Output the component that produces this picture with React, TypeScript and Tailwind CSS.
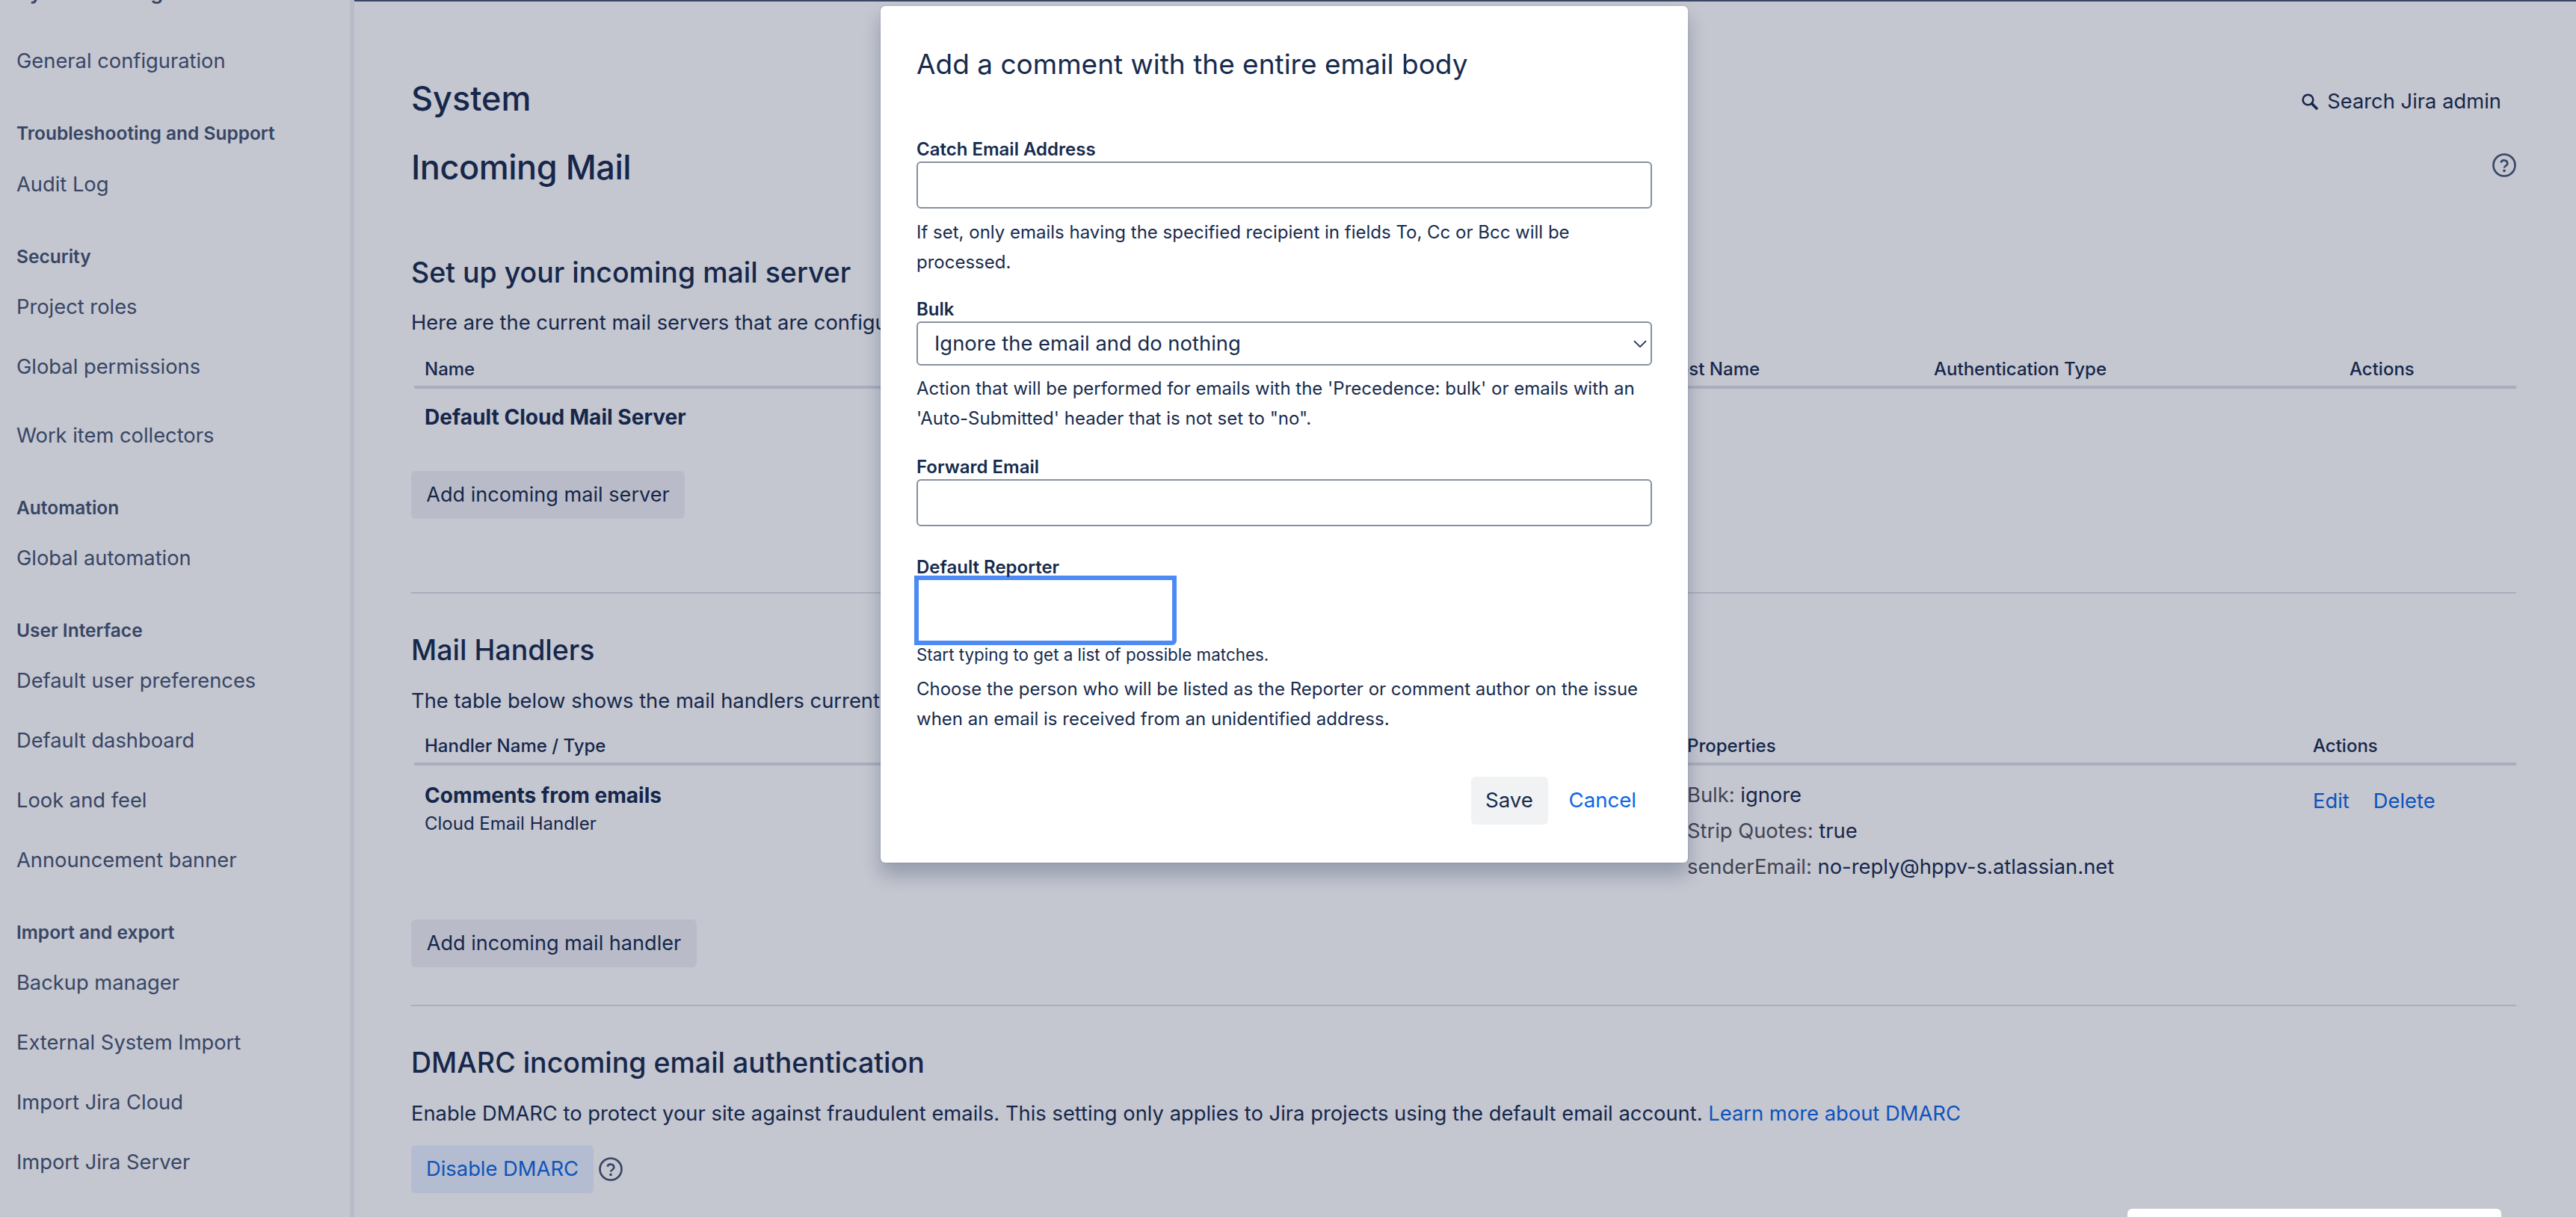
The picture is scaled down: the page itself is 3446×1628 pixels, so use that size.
import React from 'react';

const sideTop = 'pl-[22px] text-[27.3px] leading-[40px] text-[#44546f]';

const SideItem = ({ label, mt = 'mt-[40px]' }: { label: string; mt?: string }) => (
  <div className={`${sideTop} ${mt}`}>{label}</div>
);

const SideHead = ({ label, mt = 'mt-[60px]' }: { label: string; mt?: string }) => (
  <div className={`pl-[22px] text-[24.5px] leading-[32px] font-semibold text-[#44546f] ${mt}`}>{label}</div>
);

const HelpIcon = ({ className }: { className: string }) => (
  <svg viewBox="0 0 32 32" className={className} fill="none">
    <circle cx="16" cy="16" r="14.5" stroke="currentColor" strokeWidth="2.6" />
    <path d="M11.6 12.6a4.5 4.5 0 0 1 8.8 1c0 3-4.4 3.2-4.4 6" stroke="currentColor" strokeWidth="2.6" />
    <circle cx="16" cy="23.4" r="1.8" fill="currentColor" />
  </svg>
);

const Sidebar = () => (
  <aside className="w-[474px] shrink-0 border-r-[6px] border-[#f1f2f4] overflow-hidden">
    <div className={`${sideTop} mt-[-30px] font-semibold`}>System settings</div>
    <SideItem label="General configuration" mt="mt-[52px]" />
    <SideHead label="Troubleshooting and Support" mt="mt-[60px]" />
    <SideItem label="Audit Log" mt="mt-[33px]" />
    <SideHead label="Security" />
    <SideItem label="Project roles" mt="mt-[32px]" />
    <SideItem label="Global permissions" />
    <SideItem label="Work item collectors" mt="mt-[52px]" />
    <SideHead label="Automation" />
    <SideItem label="Global automation" mt="mt-[32px]" />
    <SideHead label="User Interface" />
    <SideItem label="Default user preferences" mt="mt-[32px]" />
    <SideItem label="Default dashboard" />
    <SideItem label="Look and feel" />
    <SideItem label="Announcement banner" />
    <SideHead label="Import and export" />
    <SideItem label="Backup manager" mt="mt-[32px]" />
    <SideItem label="External System Import" />
    <SideItem label="Import Jira Cloud" />
    <SideItem label="Import Jira Server" />
  </aside>
);

const Main = () => (
  <main className="flex-1 min-w-0 border-t-[2px] border-[#44546f] pl-[76px] pr-[80px] text-[#172b4d] text-[27.35px]">
    <div className="flex justify-between items-center h-[60px] mt-[100px]">
      <h1 className="text-[45px] leading-[60px] font-medium">System</h1>
      <div className="flex items-center gap-[12px] pr-[20px] mt-[8px]">
        <svg viewBox="0 0 22 22" className="w-[22px] h-[22px]" fill="none">
          <circle cx="8.5" cy="8.5" r="6.8" stroke="currentColor" strokeWidth="2.6" />
          <path d="M13.5 13.5l6.5 6.5" stroke="currentColor" strokeWidth="3.6" strokeLinecap="round" />
        </svg>
        Search Jira admin
      </div>
    </div>
    <div className="flex justify-between items-center mt-[32px] h-[60px]">
      <h2 className="text-[45px] leading-[60px] font-medium tracking-[-0.01em]">Incoming Mail</h2>
      <HelpIcon className="w-[32px] h-[32px] text-[#44546f] -mt-[6px]" />
    </div>

    <h3 className="text-[37.5px] leading-[52px] font-medium mt-[85px]">Set up your incoming mail server</h3>
    <p className="leading-[40px] mt-[21px]">Here are the current mail servers that are configured</p>
    <div className="ml-[4px] mt-[18px] border-b-[4px] border-[#dcdfe4] h-[50px] pl-[14px] grid grid-cols-[1647px_372px_556px_1fr] text-[24px] font-medium leading-[48px]">
      <span>Name</span>
      <span className="pl-[12px]">Host Name</span>
      <span>Authentication Type</span>
      <span>Actions</span>
    </div>
    <div className="pl-[18px] mt-[18px] font-bold text-[28.1px] leading-[40px]">Default Cloud Mail Server</div>
    <button className="block mt-[52px] h-[64px] w-[366px] rounded-[6px] bg-[#f1f2f4] text-[27.1px]">Add incoming mail server</button>

    <div className="border-t-[2px] border-[#dcdfe4] mt-[98px]" />

    <h3 className="text-[37.5px] leading-[52px] font-medium mt-[50px]">Mail Handlers</h3>
    <p className="leading-[40px] mt-[22px]">The table below shows the mail handlers currently configured</p>
    <div className="ml-[4px] mt-[16px] border-b-[4px] border-[#dcdfe4] h-[50px] pl-[14px] grid grid-cols-[1689px_837px_1fr] text-[24px] font-medium leading-[48px]">
      <span>Handler Name / Type</span>
      <span>Properties</span>
      <span>Actions</span>
    </div>
    <div className="ml-[4px] pl-[14px] grid grid-cols-[1689px_837px_1fr] mt-[20px]">
      <div>
        <div className="font-bold text-[28.1px] leading-[40px]">Comments from emails</div>
        <div className="text-[24px] leading-[36px]">Cloud Email Handler</div>
      </div>
      <div className="leading-[48px] -mt-[4px]">
        <div><span className="text-[#505258]">Bulk:</span> ignore</div>
        <div><span className="text-[#505258]">Strip Quotes:</span> true</div>
        <div><span className="text-[#505258]">senderEmail:</span> no-reply@hppv-s.atlassian.net</div>
      </div>
      <div className="flex gap-[32px] text-[#0c66e4] leading-[40px] mt-[8px]">
        <span>Edit</span>
        <span>Delete</span>
      </div>
    </div>
    <button className="block mt-[46px] h-[64px] w-[382px] rounded-[6px] bg-[#f1f2f4] text-[27.1px]">Add incoming mail handler</button>

    <div className="border-t-[2px] border-[#dcdfe4] mt-[50px]" />

    <h3 className="text-[37.5px] leading-[52px] font-medium mt-[50px]">DMARC incoming email authentication</h3>
    <p className="leading-[40px] mt-[22px]">
      Enable DMARC to protect your site against fraudulent emails. This setting only applies to Jira projects using the default email account.{' '}
      <span className="text-[#0c66e4]">Learn more about DMARC</span>
    </p>
    <div className="flex items-center gap-[7px] mt-[22px]">
      <button className="h-[64px] w-[244px] rounded-[6px] bg-[#e9f2ff] text-[#0c66e4]">Disable DMARC</button>
      <HelpIcon className="w-[32px] h-[32px] text-[#44546f]" />
    </div>
  </main>
);

const Modal = () => (
  <div className="absolute left-[1178px] top-[8px] w-[1080px] h-[1146px] bg-white rounded-[6px] shadow-[0_16px_24px_rgba(9,30,66,0.25),0_0_2px_rgba(9,30,66,0.31)] px-[48px] pt-[52px] text-[#172b4d]">
    <h2 className="text-[37px] leading-[52px]">Add a comment with the entire email body</h2>

    <label className="block text-[24px] leading-[32px] font-semibold mt-[72px]">Catch Email Address</label>
    <input className="block w-full h-[63px] border-[2px] border-[#8590a2] rounded-[6px]" />
    <p className="text-[24px] leading-[40px] mt-[12px]">If set, only emails having the specified recipient in fields To, Cc or Bcc will be processed.</p>

    <label className="block text-[24px] leading-[32px] font-semibold mt-[27px]">Bulk</label>
    <div className="flex items-center justify-between h-[59px] border-[2px] border-[#8590a2] rounded-[6px] pl-[22px] pr-[5px] text-[27.4px]">
      Ignore the email and do nothing
      <svg viewBox="0 0 18 10" className="w-[18px] h-[10px] text-[#2c3e5d]" fill="none">
        <path d="M1 1l8 8 8-8" stroke="currentColor" strokeWidth="1.8" />
      </svg>
    </div>
    <p className="text-[24px] leading-[40px] mt-[11px]">Action that will be performed for emails with the 'Precedence: bulk' or emails with an 'Auto-Submitted' header that is not set to "no".</p>

    <label className="block text-[24px] leading-[32px] font-semibold mt-[29px]">Forward Email</label>
    <input className="block w-full h-[63px] border-[2px] border-[#8590a2] rounded-[6px]" />

    <label className="block text-[24px] leading-[32px] font-semibold mt-[39px]">Default Reporter</label>
    <div className="w-[351px] h-[93px] border-[6px] border-[#4c8bf5] rounded-br-[6px] -ml-[3px] -mt-[5px]" />
    <p className="text-[22.4px] leading-[28px] -mt-[1px]">Start typing to get a list of possible matches.</p>
    <p className="text-[24px] leading-[40px] mt-[12px]">Choose the person who will be listed as the Reporter or comment author on the issue when an email is received from an unidentified address.</p>

    <div className="flex justify-end items-center mt-[57px] pr-[21px] text-[27.6px]">
      <button className="h-[64px] w-[103px] rounded-[6px] bg-[#f1f2f4]">Save</button>
      <span className="ml-[28px] text-[#0c66e4]">Cancel</span>
    </div>
  </div>
);

export default function App() {
  return (
    <div className="relative w-[3446px] h-[1628px] overflow-hidden bg-white flex font-['Inter',sans-serif]">
      <Sidebar />
      <Main />
      {/* dimmed layer under the dialog */}
      <div className="absolute inset-0 bg-[#141a42]/25" />
      <Modal />
      <div className="absolute left-[2846px] top-[1617px] w-[500px] h-[40px] bg-white rounded-[6px]" />
    </div>
  );
}
